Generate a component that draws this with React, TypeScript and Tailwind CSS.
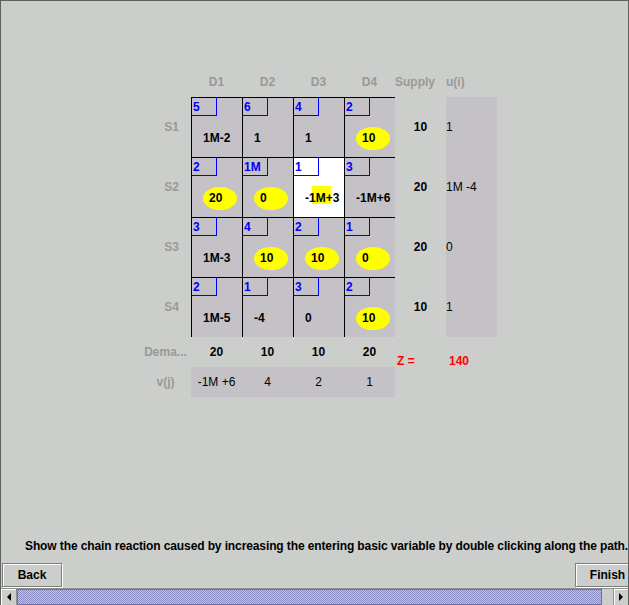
import React from 'react';

type Val = { t: string; kind?: 'plain' | 'circle' | 'white' };

const costs: (string | number)[][] = [
  [5, 6, 4, 2],
  [2, '1M', 1, 3],
  [3, 4, 2, 1],
  [2, 1, 3, 2],
];

const vals: Val[][] = [
  [{ t: '1M-2' }, { t: '1' }, { t: '1' }, { t: '10', kind: 'circle' }],
  [{ t: '20', kind: 'circle' }, { t: '0', kind: 'circle' }, { t: '-1M+3', kind: 'white' }, { t: '-1M+6' }],
  [{ t: '1M-3' }, { t: '10', kind: 'circle' }, { t: '10', kind: 'circle' }, { t: '0', kind: 'circle' }],
  [{ t: '1M-5' }, { t: '-4' }, { t: '0' }, { t: '10', kind: 'circle' }],
];

const supply = ['10', '20', '20', '10'];
const uvals = ['1', '1M -4', '0', '1'];
const demand = ['20', '10', '10', '20'];
const vvals = ['-1M +6', '4', '2', '1'];

function Cell({ cost, v }: { cost: string | number; v: Val }) {
  const white = v.kind === 'white';
  return (
    <div className={white ? 'border-t border-l border-black bg-white flex flex-col' : 'border-t border-l border-black bg-[#c4c2c7] flex flex-col'}>
      <div className="w-[25px] h-[18px] border-r border-b border-[#0000ff] text-[#0000ff] font-bold leading-[18px] pl-[1px]">{cost}</div>
      <div className="relative h-[41px] pt-[3px] pl-[11px] flex items-center">
        {v.kind === 'circle' ? (
          <div className="w-[34px] h-[23px] rounded-[50%] bg-[#ffff00] flex items-center pl-[6px] font-bold text-black leading-[14px]">{v.t}</div>
        ) : white ? (
          <>
            <div className="absolute left-[18px] top-[10px] w-[19px] h-[18px] bg-[#ffff00]" />
            <span className="relative font-bold text-black leading-[14px]">{v.t}</span>
          </>
        ) : (
          <span className="font-bold text-black leading-[14px]">{v.t}</span>
        )}
      </div>
    </div>
  );
}

function Btn({ label, w }: { label: string; w: string }) {
  return (
    <div className={`${w} h-[24px] border border-[#7d7f7d] shadow-[inset_1px_1px_0_#ffffff,1px_1px_0_#ffffff] bg-[#cccecb] flex items-center justify-center font-bold text-black leading-[14px]`}>
      {label}
    </div>
  );
}

export default function App() {
  return (
    <div className="w-[629px] h-[605px] overflow-hidden bg-[#cccecb] border-t border-l border-r border-[#5f615f] flex flex-col font-['Liberation_Sans',Arial,sans-serif] text-[12px]">
      <div className="mt-[66px] ml-[139px] grid grid-cols-[51px_51px_51px_51px_51px_51px_51px] grid-rows-[30px_60px_60px_60px_60px_30px_30px]">
        <div />
        {['D1', 'D2', 'D3', 'D4'].map((d) => (
          <div key={d} className="flex items-center justify-center font-bold text-[#999999]">{d}</div>
        ))}
        <div className="flex items-center font-bold text-[#999999]">Supply</div>
        <div className="flex items-center font-bold text-[#999999]">u(i)</div>

        {costs.map((row, i) => (
          <React.Fragment key={i}>
            <div className="flex items-center justify-end pr-[12px] font-bold text-[#999999]">S{i + 1}</div>
            {row.map((c, j) => (
              <Cell key={j} cost={c} v={vals[i][j]} />
            ))}
            <div className="flex items-center justify-center font-bold text-black">{supply[i]}</div>
            <div className="flex items-center bg-[#c4c2c7] text-black">{uvals[i]}</div>
          </React.Fragment>
        ))}

        <div className="flex items-center justify-center font-bold text-[#999999]">Dema...</div>
        {demand.map((d, j) => (
          <div key={j} className="flex items-center justify-center font-bold text-black">{d}</div>
        ))}
        <div className="row-span-2 pt-[17px] pl-[2px] font-bold text-[#ff0000] leading-[14px]">Z =</div>
        <div className="row-span-2 pt-[17px] pl-[3px] font-bold text-[#ff0000] leading-[14px]">140</div>

        <div className="flex items-center justify-center font-bold text-[#999999]">v(j)</div>
        {vvals.map((v, j) => (
          <div key={j} className="flex items-center justify-center bg-[#c4c2c7] text-black">{v}</div>
        ))}
      </div>

      <div className="mt-[142px] pl-[24px] leading-[14px] font-bold text-black whitespace-nowrap tracking-[-0.11px]">
        Show the chain reaction caused by increasing the entering basic variable by double clicking along the path.
      </div>

      <div className="mt-[10px] h-[25px] flex">
        <div className="ml-[1px]">
          <Btn label="Back" w="w-[60px]" />
        </div>
        <div className="ml-auto mr-[-12px]">
          <Btn label="Finish" w="w-[65px]" />
        </div>
      </div>

      <div className="h-[17px] flex border-t border-[#8f918f] bg-[#cccecb]">
        <div className="w-[16px] flex items-center justify-center border-r border-[#8f918f] shadow-[inset_1px_1px_0_#ffffff]">
          <svg width="4" height="8" viewBox="0 0 4 8"><polygon points="4,0 0,4 4,8" fill="#000" /></svg>
        </div>
        <div className="w-[585px] border border-[#6f6fa3] bg-[#a3a3d6] bg-[image:repeating-conic-gradient(#c0c0ee_0_25%,#8c8cc4_0_50%)] bg-[length:2px_2px]" />
        <div className="w-[11px]" />
        <div className="w-[15px] flex items-center justify-center border-l border-[#8f918f] shadow-[inset_1px_1px_0_#ffffff]">
          <svg width="4" height="8" viewBox="0 0 4 8"><polygon points="0,0 4,4 0,8" fill="#000" /></svg>
        </div>
      </div>
    </div>
  );
}
